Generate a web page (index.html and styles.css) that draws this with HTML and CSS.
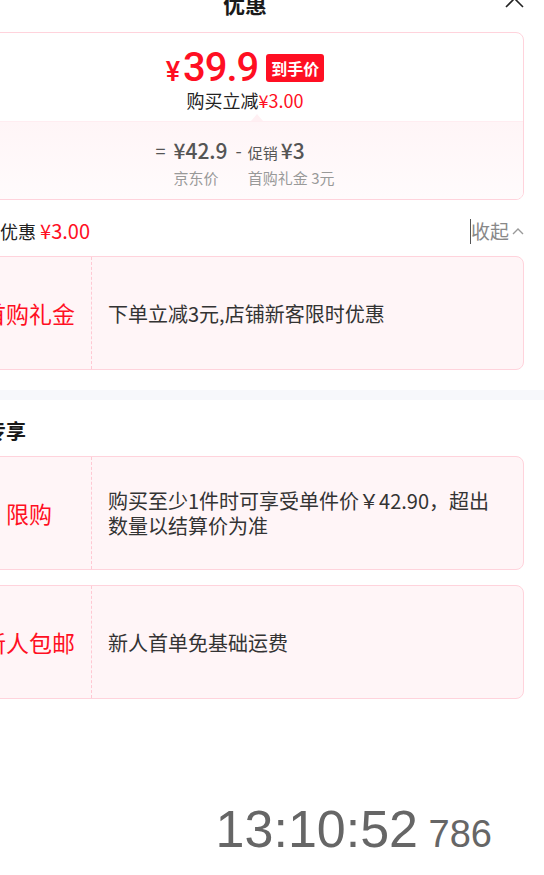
FILE: index.html
```html
<!DOCTYPE html>
<html lang="zh-CN">
<head>
  <meta charset="UTF-8" />
  <meta name="viewport" content="width=device-width, initial-scale=1.0"/>
  <title>优惠</title>
  <link rel="stylesheet" href="styles.css">
</head>
<body>

  <div class="sheet">
    <div class="sheet-head">
      <h2 class="sheet-title">优惠</h2>
      <span class="sheet-close">
        <svg width="19" height="19" viewBox="0 0 19 19"><path d="M1 1L18 18M18 1L1 18" stroke="#222" stroke-width="1.6" fill="none"/></svg>
      </span>
    </div>

    <!-- price summary -->
    <div class="price-card">
      <div class="price-main">
        <div class="price-row">
          <span class="price-yen">¥</span><span class="price-num">39.9</span><span class="price-tag">到手价</span>
        </div>
        <div class="price-sub">购买立减<em>¥3.00</em></div>
      </div>
      <div class="price-calc">
        <span class="calc-op">=</span>
        <div class="calc-col">
          <span class="calc-val">¥42.9</span>
          <span class="calc-label">京东价</span>
        </div>
        <span class="calc-op minus">-</span>
        <div class="calc-col">
          <span class="calc-val"><small>促销</small><b>¥3</b></span>
          <span class="calc-label">首购礼金 3元</span>
        </div>
      </div>
    </div>

    <div class="saved-row">
      <div class="saved-total">已享优惠 <em>¥3.00</em></div>
      <div class="fold"><span class="caret"></span>收起<svg width="12" height="8" viewBox="0 0 12 8"><path d="M1 7L6 2L11 7" stroke="#999" stroke-width="1.4" fill="none"/></svg></div>
    </div>

    <div class="perk">
      <div class="perk-name">首购礼金</div>
      <div class="perk-desc">下单立减3元,店铺新客限时优惠</div>
    </div>

    <div class="band"></div>

    <h3 class="group-title">新人专享</h3>

    <div class="perk">
      <div class="perk-name">限购</div>
      <div class="perk-desc">购买至少1件时可享受单件价￥42.90，超出数量以结算价为准</div>
    </div>

    <div class="perk">
      <div class="perk-name">新人包邮</div>
      <div class="perk-desc">新人首单免基础运费</div>
    </div>

    <div class="clock">13:10:52<span> 786</span></div>
  </div>

</body>
</html>
```

FILE: styles.css
```css
body {
  margin: 0;
  font-family: 'Noto Sans CJK SC', 'Noto Sans', sans-serif;
  background: #fff;
  color: #222;
  overflow: hidden;
}

.sheet {
  width: 598px;
  box-sizing: border-box;
  margin: -19px 0 0 -54px;
  padding: 0 20px;
}

.sheet-head {
  position: relative;
  height: 44px;
  display: flex;
  justify-content: center;
  align-items: center;
}

.sheet-title {
  margin: 0;
  font-size: 22px;
  font-weight: bold;
  line-height: 44px;
  color: #1a1a1a;
}

.sheet-close {
  position: absolute;
  right: 0;
  top: 8px;
  width: 19px;
  height: 19px;
}

.sheet-close svg {
  display: block;
}

/* price summary card */
.price-card {
  margin-top: 7px;
  border: 1px solid #ffd3dc;
  border-radius: 8px;
  overflow: hidden;
}

.price-main {
  padding: 15px 0 9px;
  text-align: center;
}

.price-row {
  height: 40px;
  display: flex;
  justify-content: center;
  align-items: baseline;
  color: #ff0f23;
  font-family: Roboto, sans-serif;
}

.price-yen {
  font-size: 27px;
  font-weight: 500;
  line-height: 40px;
  margin-right: 3px;
}

.price-num {
  font-size: 40px;
  font-weight: 500;
  line-height: 40px;
  letter-spacing: -1px;
}

.price-tag {
  align-self: center;
  margin-left: 8px;
  padding: 0 5px;
  height: 28px;
  line-height: 28px;
  border-radius: 3px;
  background: #ff0f23;
  color: #fff;
  font-family: 'Noto Sans CJK SC', sans-serif;
  font-size: 16px;
  font-weight: bold;
}

.price-sub {
  font-size: 18px;
  line-height: 24px;
  color: #222;
}

.price-sub em {
  font-style: normal;
  color: #ff0f23;
}

.price-calc {
  position: relative;
  display: flex;
  justify-content: center;
  align-items: flex-start;
  padding: 14px 0 11px;
  border-top: 1px solid #ffedf1;
  background: linear-gradient(#fff5f7, #fffbfc);
  color: #555;
}

.price-calc::before {
  content: "";
  position: absolute;
  top: -8px;
  left: 284px;
  border: 6px solid transparent;
  border-top: 0;
  border-bottom: 7px solid #fff0f3;
}

.calc-op {
  font-size: 18px;
  line-height: 28px;
  margin-right: 8px;
}

.calc-op.minus {
  margin: 0 6px 0 8px;
}

.calc-col {
  display: flex;
  flex-direction: column;
}

.calc-val {
  height: 28px;
  font-size: 21px;
  font-weight: 500;
  line-height: 28px;
}

.calc-val small {
  font-size: 15px;
  font-weight: normal;
  line-height: 20px;
}

.calc-val b {
  font-weight: 500;
  margin-left: 3px;
}

.calc-label {
  margin-top: 4px;
  font-size: 15px;
  line-height: 20px;
  color: #999;
}

/* total saved */
.saved-row {
  display: flex;
  justify-content: space-between;
  align-items: center;
  margin: 18px 0 12px;
  height: 26px;
}

.saved-total {
  margin-left: -2px;
  font-size: 18px;
  line-height: 26px;
  color: #222;
}

.saved-total em {
  font-style: normal;
  font-size: 20px;
  color: #ff0f23;
}

.fold {
  display: flex;
  align-items: center;
  font-size: 19px;
  line-height: 26px;
  color: #888;
}

.fold .caret {
  width: 0;
  height: 25px;
  border-left: 1px solid #555;
}

.fold svg {
  margin-left: 3px;
}

/* perk cards */
.perk {
  display: flex;
  min-height: 112px;
  margin-bottom: 15px;
  border: 1px solid #ffd3dc;
  border-radius: 8px;
  background: #fff5f7;
}

.perk-name {
  width: 125px;
  flex-shrink: 0;
  box-sizing: border-box;
  display: flex;
  align-items: center;
  justify-content: center;
  border-right: 1px dashed #ffc8d3;
  color: #ff0f23;
  font-size: 23px;
  white-space: nowrap;
}

.perk-desc {
  display: flex;
  align-items: center;
  padding: 0 24px 0 16px;
  font-size: 20px;
  line-height: 25px;
  color: #333;
}

.band {
  height: 10px;
  margin: 20px -20px 0;
  background: #f7f8fb;
}

.group-title {
  margin: 17px 0 11px -20px;
  font-size: 20px;
  font-weight: bold;
  line-height: 28px;
  color: #1a1a1a;
}

.clock {
  margin-top: 104px;
  padding-right: 32px;
  text-align: right;
  font-family: 'Liberation Sans', Arial, sans-serif;
  font-size: 52px;
  line-height: 52px;
  color: #666;
}

.clock span {
  font-size: 38px;
}
```
